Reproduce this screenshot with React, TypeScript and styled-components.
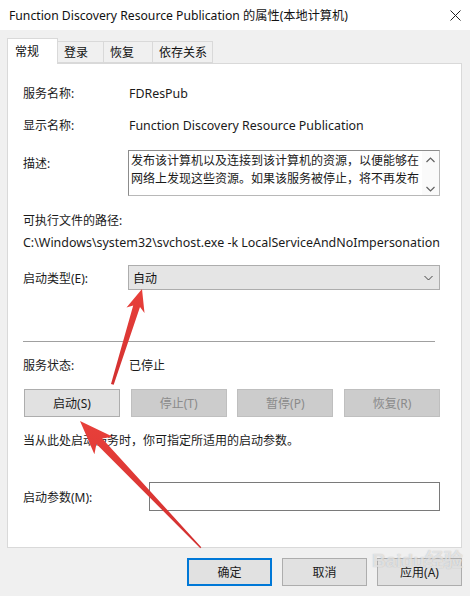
import React from "react";
import styled, { createGlobalStyle } from "styled-components";

const GlobalStyle = createGlobalStyle`
  html, body { margin: 0; padding: 0; }
  body {
    background: #f0f0f0;
    font-family: "Noto Sans", "Noto Sans CJK SC", sans-serif;
    font-size: 12px;
    color: #000;
  }
  * { box-sizing: border-box; }
`;

const Window = styled.div`
  position: relative;
  width: 470px;
  height: 596px;
  background: #f0f0f0;
  overflow: hidden;
`;

const TitleBar = styled.div`
  height: 30px;
  background: #fff;
  display: flex;
  align-items: center;
  justify-content: space-between;
  padding: 0 9px 0 9px;
  font-size: 12.2px;
  color: #111;
`;

const CloseIcon = styled.svg`
  width: 11px;
  height: 11px;
  display: block;
`;

const Body = styled.div`
  padding: 8px 8px 0 7px;
`;

const TabStrip = styled.div`
  display: flex;
  align-items: flex-end;
  height: 25px;
`;

const Tab = styled.div<{ $active?: boolean; $w: number }>`
  width: ${(p) => p.$w}px;
  height: ${(p) => (p.$active ? 26 : 22)}px;
  margin-bottom: ${(p) => (p.$active ? -1 : 0)}px;
  background: ${(p) => (p.$active ? "#fff" : "#f0f0f0")};
  border: 1px solid #d9d9d9;
  border-bottom: ${(p) => (p.$active ? "none" : "1px solid #d9d9d9")};
  border-left: ${(p) => (p.$active ? "1px solid #d9d9d9" : "none")};
  display: flex;
  align-items: center;
  padding-left: ${(p) => (p.$active ? 7 : 6)}px;
  padding-bottom: ${(p) => (p.$active ? 2 : 0)}px;
  position: relative;
  z-index: ${(p) => (p.$active ? 2 : 1)};
  color: #111;
`;

const Panel = styled.div`
  height: 485px;
  background: #fff;
  border: 1px solid #d9d9d9;
  padding: 19px 21px 0 15px;
  display: flex;
  flex-direction: column;
`;

const Row = styled.div<{ $mt: number; $h: number; $align?: string }>`
  display: flex;
  align-items: ${(p) => p.$align || "center"};
  margin-top: ${(p) => p.$mt}px;
  height: ${(p) => p.$h}px;
  flex-shrink: 0;
`;

const Label = styled.div<{ $w?: number; $pt?: number }>`
  width: ${(p) => p.$w ?? 105}px;
  flex-shrink: 0;
  padding-top: ${(p) => p.$pt ?? 0}px;
  color: #1a1a1a;
  white-space: nowrap;
`;

const Value = styled.div<{ $latin?: boolean }>`
  padding-left: 1px;
  color: #1a1a1a;
  white-space: nowrap;
  font-size: ${(p) => (p.$latin ? "12.4px" : "12px")};
`;

const TextLine = styled.div<{ $latin?: boolean }>`
  color: #1a1a1a;
  white-space: nowrap;
  font-size: ${(p) => (p.$latin ? "12.45px" : "12px")};
`;

const DescBox = styled.div`
  flex: 1;
  height: 46px;
  display: flex;
  border: 1px solid #b8b8b8;
  border-top-color: #8c8c8c;
  border-left-color: #8c8c8c;
  background: #fff;
`;

const DescText = styled.div`
  flex: 1;
  padding: 1px 0 0 2px;
  line-height: 18px;
  color: #1a1a1a;
`;

const ScrollCol = styled.div`
  width: 17px;
  display: flex;
  flex-direction: column;
  justify-content: space-between;
  align-items: center;
  padding: 6px 0 3px;
  background: #fafafa;
`;

const Chevron = styled.svg`
  width: 9px;
  height: 6px;
  display: block;
`;

const Select = styled.div`
  flex: 1;
  height: 25px;
  background: #e5e5e5;
  border: 1px solid #adadad;
  display: flex;
  align-items: center;
  justify-content: space-between;
  padding: 0 6px 0 4px;
  color: #111;
`;

const Separator = styled.div`
  margin-top: 51px;
  height: 1px;
  background: #a0a0a0;
  width: 412px;
  flex-shrink: 0;
`;

const ButtonRow = styled.div`
  display: flex;
  justify-content: space-between;
  margin-top: 14px;
  padding-left: 1px;
  flex-shrink: 0;
`;

const Button = styled.div<{ $disabled?: boolean }>`
  width: 96px;
  height: 28px;
  display: flex;
  align-items: center;
  justify-content: center;
  background: ${(p) => (p.$disabled ? "#cccccc" : "#e1e1e1")};
  border: 1px solid ${(p) => (p.$disabled ? "#bfbfbf" : "#adadad")};
  color: ${(p) => (p.$disabled ? "#8a8a8a" : "#1a1a1a")};
`;

const Input = styled.div`
  flex: 1;
  height: 29px;
  border: 1px solid #7a7a7a;
  background: #fff;
`;

const Footer = styled.div`
  display: flex;
  justify-content: flex-end;
  gap: 10px;
  margin-top: 10px;
`;

const DialogButton = styled.div<{ $default?: boolean }>`
  width: 85px;
  height: 28px;
  display: flex;
  align-items: center;
  justify-content: center;
  background: #e1e1e1;
  border: ${(p) => (p.$default ? "2px solid #0078d7" : "1px solid #adadad")};
  color: #1a1a1a;
`;

const Overlay = styled.svg`
  position: absolute;
  left: 0;
  top: 0;
  width: 470px;
  height: 596px;
  pointer-events: none;
`;

const Watermark = styled.div`
  position: absolute;
  left: 372px;
  top: 545px;
  font-family: "Liberation Sans", "Noto Sans CJK SC", sans-serif;
  font-size: 19px;
  font-weight: bold;
  color: rgba(255, 255, 255, 0.6);
  text-shadow: 0 0 1px rgba(120, 120, 120, 0.5);
  pointer-events: none;
`;

export default function App() {
  return (
    <>
      <GlobalStyle />
      <Window>
        <TitleBar>
          <span>Function Discovery Resource Publication 的属性(本地计算机)</span>
          <CloseIcon viewBox="0 0 11 11">
            <path d="M0.5 0.5 L10.5 10.5 M10.5 0.5 L0.5 10.5" stroke="#222" strokeWidth="1" fill="none" />
          </CloseIcon>
        </TitleBar>
        <Body>
          <TabStrip>
            <Tab $active $w={51}>常规</Tab>
            <Tab $w={46}>登录</Tab>
            <Tab $w={49}>恢复</Tab>
            <Tab $w={60}>依存关系</Tab>
          </TabStrip>
          <Panel>
            <Row $mt={0} $h={20}>
              <Label>服务名称:</Label>
              <Value $latin>FDResPub</Value>
            </Row>
            <Row $mt={12} $h={20}>
              <Label>显示名称:</Label>
              <Value $latin>Function Discovery Resource Publication</Value>
            </Row>
            <Row $mt={15} $h={46} $align="flex-start">
              <Label $pt={4}>描述:</Label>
              <DescBox>
                <DescText>
                  发布该计算机以及连接到该计算机的资源，以便能够在网络上发现这些资源。如果该服务被停止，将不再发布
                </DescText>
                <ScrollCol>
                  <Chevron viewBox="0 0 9 6">
                    <path d="M0.5 5 L4.5 1 L8.5 5" stroke="#606060" strokeWidth="1.2" fill="none" />
                  </Chevron>
                  <Chevron viewBox="0 0 9 6">
                    <path d="M0.5 1 L4.5 5 L8.5 1" stroke="#606060" strokeWidth="1.2" fill="none" />
                  </Chevron>
                </ScrollCol>
              </DescBox>
            </Row>
            <Row $mt={14} $h={20}>
              <TextLine>可执行文件的路径:</TextLine>
            </Row>
            <Row $mt={2} $h={20}>
              <TextLine $latin>C:\Windows\system32\svchost.exe -k LocalServiceAndNoImpersonation</TextLine>
            </Row>
            <Row $mt={13} $h={25}>
              <Label>启动类型(E):</Label>
              <Select>
                <span>自动</span>
                <Chevron viewBox="0 0 9 6">
                  <path d="M0.5 1 L4.5 5 L8.5 1" stroke="#444" strokeWidth="1" fill="none" />
                </Chevron>
              </Select>
            </Row>
            <Separator />
            <Row $mt={13} $h={20}>
              <Label>服务状态:</Label>
              <Value>已停止</Value>
            </Row>
            <ButtonRow>
              <Button>启动(S)</Button>
              <Button $disabled>停止(T)</Button>
              <Button $disabled>暂停(P)</Button>
              <Button $disabled>恢复(R)</Button>
            </ButtonRow>
            <Row $mt={13} $h={20}>
              <TextLine>当从此处启动服务时，你可指定所适用的启动参数。</TextLine>
            </Row>
            <Row $mt={32} $h={29}>
              <Label $w={126}>启动参数(M):</Label>
              <Input />
            </Row>
          </Panel>
          <Footer>
            <DialogButton $default>确定</DialogButton>
            <DialogButton>取消</DialogButton>
            <DialogButton>应用(A)</DialogButton>
          </Footer>
        </Body>
        <Watermark>Baidu经验</Watermark>
        <Overlay viewBox="0 0 470 596">
          <defs>
            <linearGradient id="ag1" x1="0" y1="0" x2="0" y2="1">
              <stop offset="0" stopColor="#e8403a" />
              <stop offset="1" stopColor="#d23030" />
            </linearGradient>
          </defs>
          <polygon
            points="142,289 144.5,313 140,307 113.7,384.7 111,384.1 133.2,305.5 126.5,307.6"
            fill="url(#ag1)"
          />
          <polygon
            points="80,421 112.8,436.7 102.2,438.5 201.3,547.2 200.3,548.2 96.4,444.1 94.4,454.3"
            fill="url(#ag1)"
          />
        </Overlay>
      </Window>
    </>
  );
}
